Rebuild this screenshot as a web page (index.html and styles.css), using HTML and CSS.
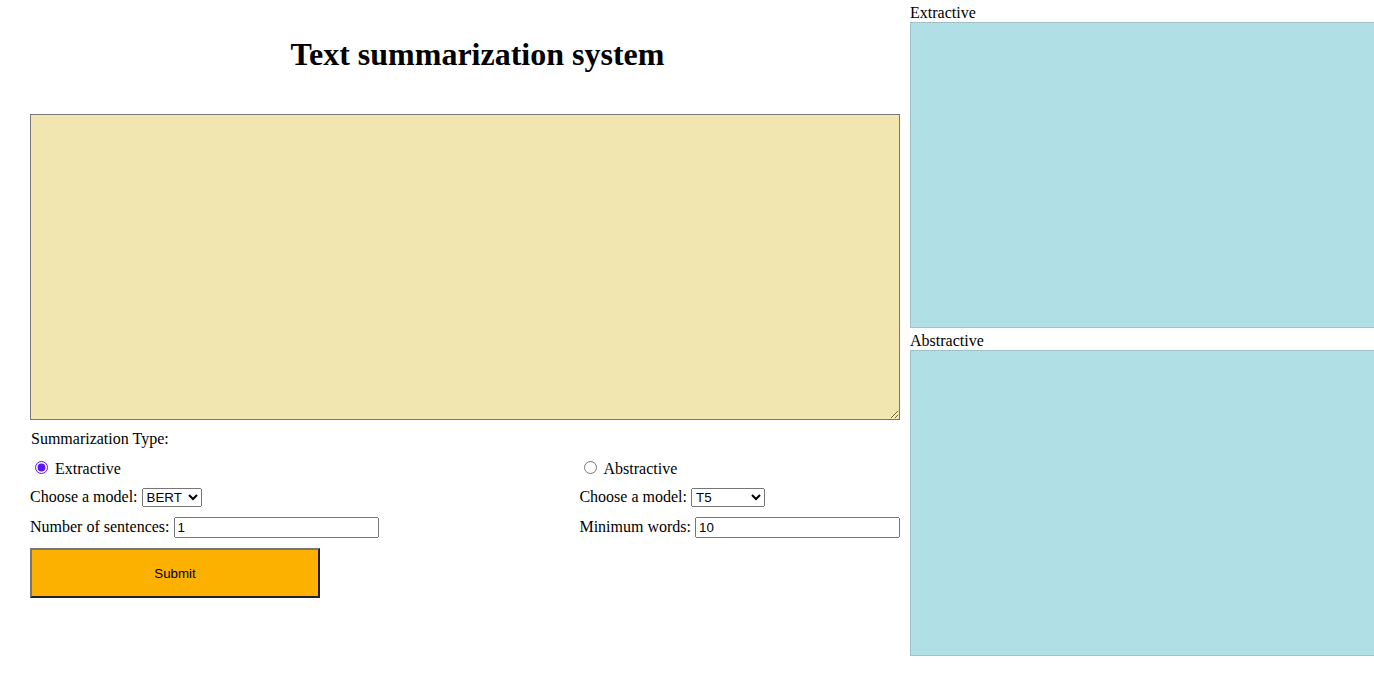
FILE: index.html
```html
<!DOCTYPE html>
<html lang="en">
<head>
<meta charset="utf-8">
<title>Text summarization system</title>
<link rel="stylesheet" href="styles.css">
</head>
<body>
<div class="page">
  <main class="left">
    <h1 class="title">Text summarization system</h1>
    <textarea class="source"></textarea>
    <div class="row type-label">Summarization Type:</div>
    <div class="options">
      <div class="option">
        <div class="row radio-row"><input class="radio" type="radio" name="type" id="ext" checked> <label for="ext">Extractive</label></div>
        <div class="row">Choose a model: <select class="model model-ext"><option>BERT</option></select></div>
        <div class="row">Number of sentences: <input class="field" type="text" value="1"></div>
      </div>
      <div class="option">
        <div class="row radio-row"><input class="radio" type="radio" name="type" id="abs"> <label for="abs">Abstractive</label></div>
        <div class="row">Choose a model: <select class="model model-abs"><option>T5</option></select></div>
        <div class="row">Minimum words: <input class="field" type="text" value="10"></div>
      </div>
    </div>
    <button class="submit" type="button">Submit</button>
  </main>
  <aside class="outputs">
    <section class="out">
      <div class="out-label">Extractive</div>
      <div class="panel"></div>
    </section>
    <section class="out">
      <div class="out-label">Abstractive</div>
      <div class="panel"></div>
    </section>
  </aside>
</div>
</body>
</html>
```

FILE: styles.css
```css
html, body {
  margin: 0;
  padding: 0;
  background: #ffffff;
}

body {
  font-family: "Liberation Serif", "Times New Roman", serif;
  font-size: 16px;
  color: #000000;
  overflow: hidden;
}

.page {
  display: flex;
  align-items: flex-start;
}

.left {
  width: 870px;
  margin-left: 30px;
  flex: none;
}

.title {
  margin: 36px 0 41px;
  padding-left: 25px;
  text-align: center;
  font-size: 32px;
  font-weight: bold;
  line-height: 37px;
}

.source {
  display: block;
  box-sizing: border-box;
  width: 870px;
  height: 306px;
  margin: 0;
  padding: 2px;
  border: 1px solid #767676;
  background: #f1e6b0;
  resize: both;
}

.row {
  height: 29px;
  line-height: 18px;
  white-space: nowrap;
}

.type-label {
  margin-top: 10px;
  padding-left: 1px;
}

.options {
  display: flex;
  justify-content: space-between;
}

.option .radio-row {
  margin-top: -1px;
  height: 30px;
}

.option .row:last-child {
  height: 31px;
}

.radio {
  margin: 3px 3px 0 5px;
  accent-color: #5b13f7;
}

.model {
  font-family: "Liberation Sans", Arial, sans-serif;
  font-size: 13.33px;
}

.model-ext {
  width: 60px;
}

.model-abs {
  width: 74px;
}

.field {
  box-sizing: border-box;
  width: 205px;
  height: 21px;
  font-family: "Liberation Sans", Arial, sans-serif;
  font-size: 13.33px;
  margin: 0;
}

.submit {
  display: block;
  box-sizing: border-box;
  width: 290px;
  height: 50px;
  margin: 0;
  background: #fcb000;
  border-style: solid;
  border-width: 2px;
  border-color: #767676 #222222 #222222 #767676;
  font-family: "Liberation Sans", Arial, sans-serif;
  font-size: 13.33px;
  color: #000000;
}

.outputs {
  flex: 1;
  margin-left: 10px;
  padding-top: 4px;
}

.out + .out {
  margin-top: 4px;
}

.out-label {
  line-height: 18px;
}

.panel {
  box-sizing: border-box;
  height: 306px;
  background: #b0e0e6;
  border: 1px solid #9dc3c9;
  border-right: none;
}
```
